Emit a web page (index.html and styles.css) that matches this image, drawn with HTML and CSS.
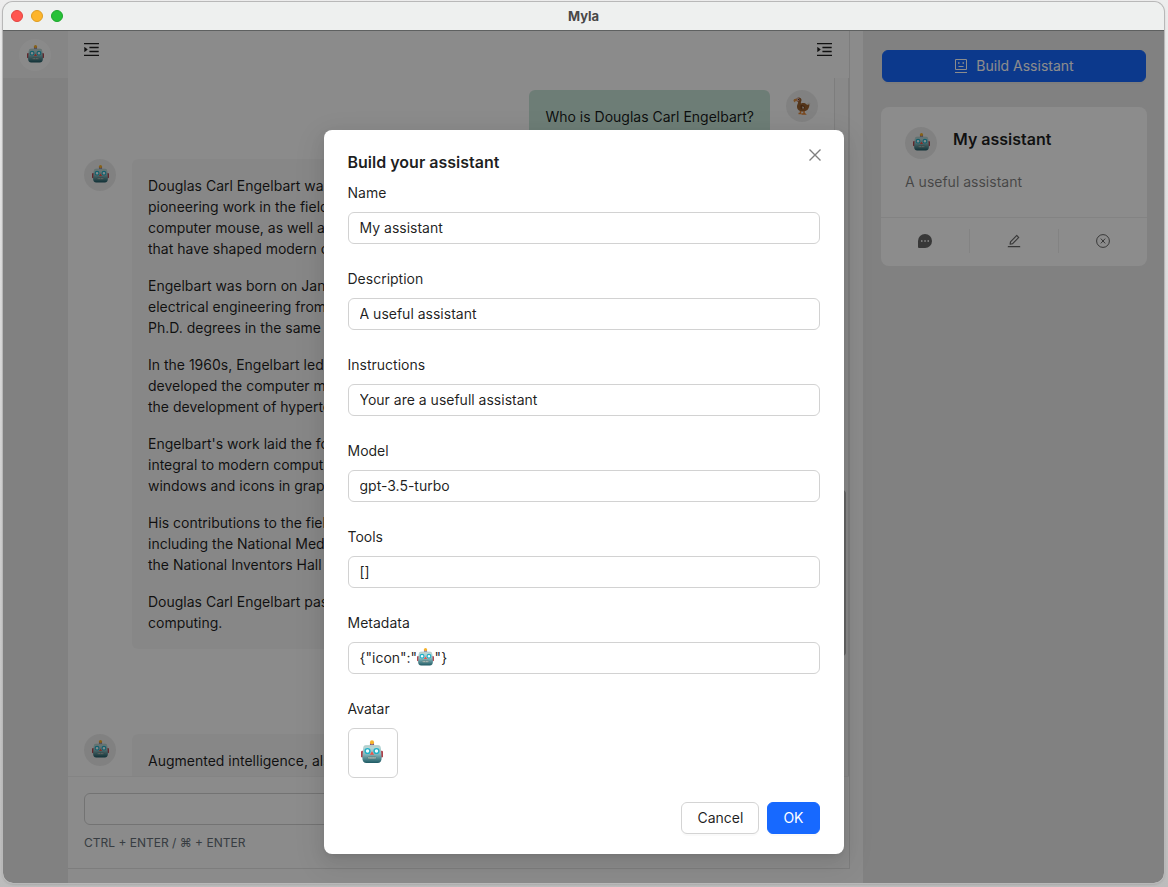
FILE: index.html
```html
<!DOCTYPE html>
<html lang="en">
<head>
<meta charset="utf-8">
<title>Myla</title>
<link rel="stylesheet" href="styles.css">
</head>
<body>
<svg class="defs" aria-hidden="true">
  <defs>
    <linearGradient id="face" x1="0" y1="0" x2="0" y2="1"><stop offset="0" stop-color="#c9e3e2"/><stop offset=".5" stop-color="#86b8bd"/><stop offset="1" stop-color="#1f5a64"/></linearGradient>
    <symbol id="robot" viewBox="0 0 32 34">
      <rect x="0" y="15" width="4" height="10" rx="2" fill="#b0424b"/>
      <rect x="28" y="15" width="4" height="10" rx="2" fill="#b0424b"/>
      <rect x="13" y="4" width="6" height="4" rx="1" fill="#75508f"/>
      <circle cx="16" cy="3" r="3" fill="#f6b22c"/>
      <path d="M7 7h18q4 0 4 5l1 14q0 7-6 7H8q-6 0-6-7l1-14q0-5 4-5z" fill="url(#face)"/>
      <path d="M7 7h18q3 0 3 3H4q0-3 3-3z" fill="#b7cfcc"/>
      <circle cx="9.500" cy="15.500" r="3.500" fill="#effcff" stroke="#20aec5" stroke-width="2"/>
      <circle cx="22.500" cy="15.500" r="3.500" fill="#effcff" stroke="#20aec5" stroke-width="2"/>
      <path d="M16 16l3 5h-6z" fill="#ef5146"/>
      <rect x="10" y="24" width="12" height="3" rx="1.500" fill="#d9ddd4" stroke="#4d7476"/>
      <path d="M13 24v3M16 24v3M19 24v3" stroke="#4d7476"/>
    </symbol>
    <symbol id="dodo" viewBox="0 0 36 36">
      <path d="M27 14c3-4 6-4 8-1-2 4-5 6-9 6z" fill="#dedad2"/>
      <path d="M7 3c4-4 10-2 10 3 0 3-2 5-1 7 5-2 9-1 12 3 2-1 4-1 5-1-1 10-6 14-13 14S8 26 8 19c0-4 3-6 2-9L7 8z" fill="#99612f"/>
      <path d="M15 17c4-2 8 0 9 4-1 4-6 5-9 2z" fill="#7b471f"/>
      <path d="M18 19l4 1-2 5z" fill="#e5ddd0"/>
      <path d="M8 2c3-1 5 1 5 4l-3 3-4-1z" fill="#d8a8a0"/>
      <path d="M7 4c-4-1-6 1-6 4l3 3 1-3 4-1z" fill="#dc9142"/>
      <circle cx="11" cy="5" r="1" fill="#251b19"/>
      <path d="M15 28v5h-4M22 28v4l2 2h-7" fill="none" stroke="#df8336" stroke-width="3"/>
    </symbol>
    <symbol id="menu" viewBox="112 112 800 800"><path fill="currentColor" d="M408 442h480c4.400 0 8-3.600 8-8v-56c0-4.400-3.600-8-8-8H408c-4.400 0-8 3.600-8 8v56c0 4.400 3.600 8 8 8zm-8 204c0 4.400 3.600 8 8 8h480c4.400 0 8-3.600 8-8v-56c0-4.400-3.600-8-8-8H408c-4.400 0-8 3.600-8 8v56zm504-486H120c-4.400 0-8 3.600-8 8v56c0 4.400 3.600 8 8 8h784c4.400 0 8-3.600 8-8v-56c0-4.400-3.600-8-8-8zm0 632H120c-4.400 0-8 3.600-8 8v56c0 4.400 3.600 8 8 8h784c4.400 0 8-3.600 8-8v-56c0-4.400-3.600-8-8-8zM142.400 642.100L298.700 519a8.840 8.840 0 000-13.900L142.400 381.900c-5.800-4.600-14.400-.5-14.400 6.900v246.300a8.900 8.900 0 0014.400 7z"/></symbol>
  </defs>
</svg>

<div class="window">
  <header class="titlebar">
    <div class="lights"><i class="light red"></i><i class="light amber"></i><i class="light green"></i></div>
    <h1 class="app-title">Myla</h1>
  </header>

  <div class="app">
    <nav class="rail"><a class="rail-item" href="#" aria-label="My assistant"><span class="avatar pale"><svg class="robot"><use href="#robot"/></svg></span></a></nav>

    <main class="center">
      <section class="chat">
        <div class="chat-head">
          <button class="plain" aria-label="Toggle left panel"><svg class="menu-icon"><use href="#menu"/></svg></button>
          <button class="plain" aria-label="Toggle right panel"><svg class="menu-icon"><use href="#menu"/></svg></button>
        </div>
        <div class="scroller">
          <div class="messages">
            <article class="message mine"><div class="bubble"><p>Who is Douglas Carl Engelbart?</p></div><span class="avatar"><svg class="dodo"><use href="#dodo"/></svg></span></article>
            <article class="message"><span class="avatar"><svg class="robot"><use href="#robot"/></svg></span>
              <div class="bubble wide">
                <p>Douglas Carl Engelbart was<br>pioneering work in the field<br>computer mouse, as well as<br>that have shaped modern c</p>
                <p>Engelbart was born on Janu<br>electrical engineering from<br>Ph.D. degrees in the same f</p>
                <p>In the 1960s, Engelbart led<br>developed the computer mo<br>the development of hyperte</p>
                <p>Engelbart's work laid the fo<br>integral to modern computi<br>windows and icons in graph</p>
                <p>His contributions to the fiel<br>including the National Meda<br>the National Inventors Hall o</p>
                <p>Douglas Carl Engelbart pas<br>computing.</p>
              </div></article>
            <article class="message mine"><div class="bubble"><p>Augmented intelligence?</p></div><span class="avatar"><svg class="dodo"><use href="#dodo"/></svg></span></article>
            <article class="message"><span class="avatar"><svg class="robot"><use href="#robot"/></svg></span><div class="bubble wide"><p>Augmented intelligence, als</p></div></article>
          </div>
          <div class="track"><div class="thumb"></div></div>
        </div>
        <form class="composer">
          <input class="field" id="prompt" type="text">
          <label class="hint" for="prompt">CTRL + ENTER / ⌘ + ENTER</label>
        </form>
      </section>
    </main>

    <aside class="side">
      <button class="btn primary build"><svg class="icon-14" viewBox="0 0 14 16" fill="none" stroke="currentColor"><path d="M1.500 1.500h11v10h-11zM1 14.500h12M4.500 8.500h5"/><path d="M4 5h1.500M8.500 5H10" stroke-width="1.500"/></svg>Build Assistant</button>
      <article class="card">
        <div class="card-body">
          <div class="card-head"><span class="avatar"><svg class="robot"><use href="#robot"/></svg></span><h2 class="card-title">My assistant</h2></div>
          <p class="card-text">A useful assistant</p>
        </div>
        <div class="actions">
          <button class="plain action" aria-label="Chat"><svg class="icon-14" viewBox="0 0 14 14"><path d="M0 7a7 7 0 1 1 7 7H1q-1 0-1-1z" fill="currentColor"/><path d="M3 7h1.500M6.300 7h1.500M9.500 7H11" stroke="#fff" stroke-width="1.400"/></svg></button>
          <button class="plain action" aria-label="Edit"><svg class="icon-14" viewBox="64 64 896 896"><path fill="currentColor" d="M257.700 752c2 0 4-.2 6-.5L431.900 722c2-.4 3.900-1.300 5.300-2.800l423.900-423.900a9.960 9.960 0 000-14.100L694.900 114.900c-1.900-1.900-4.400-2.900-7.100-2.900s-5.200 1-7.100 2.900L256.800 538.800c-1.500 1.500-2.400 3.300-2.800 5.300l-29.500 168.200a33.500 33.500 0 009.400 29.800c6.600 6.400 14.900 9.900 23.800 9.900zm67.400-174.400L687.800 215l73.300 73.300-362.700 362.600-88.900 15.700 15.600-89zM880 836H144c-17.700 0-32 14.300-32 32v36c0 4.400 3.600 8 8 8h784c4.400 0 8-3.600 8-8v-36c0-17.700-14.300-32-32-32z"/></svg></button>
          <button class="plain action" aria-label="Delete"><svg class="icon-14" viewBox="0 0 14 14" fill="none" stroke="currentColor"><circle cx="7" cy="7" r="6.400"/><path d="M4.800 4.600l4.400 4.800M9.200 4.600L4.800 9.400"/></svg></button>
        </div>
      </article>
    </aside>

    <div class="mask">
      <section class="modal" role="dialog" aria-labelledby="dlg-title">
        <button class="plain close" aria-label="Close"><svg class="close-icon" viewBox="0 0 12 12" fill="none" stroke="currentColor" stroke-width="1.400"><path d="M.5.5l11 11M11.500.5l-11 11"/></svg></button>
        <h2 class="modal-title" id="dlg-title">Build your assistant</h2>
        <form class="form">
          <div class="row"><label for="name">Name</label><input class="field" id="name" type="text" value="My assistant"></div>
          <div class="row"><label for="desc">Description</label><input class="field" id="desc" type="text" value="A useful assistant"></div>
          <div class="row"><label for="inst">Instructions</label><input class="field" id="inst" type="text" value="Your are a usefull assistant"></div>
          <div class="row"><label for="model">Model</label><input class="field" id="model" type="text" value="gpt-3.5-turbo"></div>
          <div class="row"><label for="tools">Tools</label><input class="field" id="tools" type="text" value="[]"></div>
          <div class="row"><label for="meta">Metadata</label><div class="meta"><input class="field" id="meta" type="text" value="{&quot;icon&quot;:&quot;&#8195;&#8197;&quot;}"><svg class="robot meta-icon"><use href="#robot"/></svg></div></div>
          <div class="row"><label for="avatar">Avatar</label><button class="picker" id="avatar" type="button"><svg class="robot-large"><use href="#robot"/></svg></button></div>
          <footer class="buttons"><button class="btn" type="button">Cancel</button><button class="btn primary" type="button">OK</button></footer>
        </form>
      </section>
    </div>
  </div>
</div>
</body>
</html>
```

FILE: styles.css
```css
* { box-sizing: border-box; }
html, body { height: 100%; }
body {
  margin: 0;
  padding: 2px 4px 4px 3px;
  overflow: hidden;
  background: linear-gradient(#ededed, #d0d0d0 60%, #bcbcbc);
  font: 14px/22px Inter, "Open Sans", sans-serif;
  color: rgba(0, 0, 0, .88);
}
h1, h2, p { margin: 0; }
button, input { font: inherit; color: inherit; }
svg { display: block; }
.defs { position: absolute; width: 0; height: 0; }

.window {
  height: 100%;
  display: flex;
  flex-direction: column;
  border-radius: 10px;
  overflow: hidden;
  box-shadow: 0 0 0 1px #b8b8b8, 0 1px 3px rgba(0, 0, 0, .2);
}
.titlebar {
  flex: none;
  height: 29px;
  display: grid;
  grid-template-columns: 1fr auto 1fr;
  align-items: center;
  padding: 0 8px;
  background: #eef0ef;
  border-bottom: 1px solid #5e6060;
}
.lights { display: flex; gap: 8px; }
.light { width: 12px; height: 12px; border-radius: 50%; border: 1px solid; }
.red { background: #ff5650; border-color: #e2443f; }
.amber { background: #fdb52c; border-color: #dd9c22; }
.green { background: #27c138; border-color: #1da62c; }
.app-title { font-size: 13px; line-height: 20px; font-weight: 700; color: #484848; }

.app { position: relative; flex: 1; min-height: 0; display: flex; background: #fff; }
.rail { flex: none; width: 65px; background: #ebebeb; }
.rail-item { display: grid; place-items: center; height: 47px; padding-right: 1px; background: #f4f4f4; }
.avatar {
  flex: none;
  width: 32px;
  height: 32px;
  display: grid;
  place-items: center;
  border-radius: 50%;
  background: #ececec;
}
.pale { background: #fcfcfc; }
.robot { width: 17px; height: 18px; margin-bottom: 2px; }
.robot-large { width: 22px; height: 24px; margin: 0 2px 2px 0; }
.dodo { width: 18px; height: 18px; margin-bottom: 1px; }
.plain { padding: 0; border: 0; background: none; }

.center { flex: 1; min-width: 0; padding: 0 13px 14px 0; background: #fdfdfd; }
.chat {
  height: 100%;
  display: flex;
  flex-direction: column;
  border: solid #e4e4e4;
  border-width: 0 1px 1px 0;
}
.chat-head {
  flex: none;
  height: 47px;
  padding: 11px 17px 0 16px;
  display: flex;
  align-items: flex-start;
  justify-content: space-between;
}
.menu-icon { width: 15px; height: 15px; }
.scroller { flex: 1; min-height: 0; display: flex; overflow: hidden; }
.messages { flex: 1; min-width: 0; padding: 12px 16px; display: flex; flex-direction: column; gap: 16px; }
.message { display: flex; align-items: flex-start; gap: 16px; }
.mine { justify-content: flex-end; }
.bubble {
  display: flex;
  flex-direction: column;
  gap: 16px;
  padding: 16px;
  line-height: 21px;
  white-space: nowrap;
  border-radius: 6px;
  background: #f6f6f6;
}
.wide { flex: 1; margin-right: 48px; }
.mine .bubble { background: #c7e3d7; }
.track {
  flex: none;
  width: 15px;
  padding: 412px 2px 0 3px;
  background: #fafafa;
  border: solid #e4e4e4;
  border-width: 0 1px;
}
.thumb { height: 166px; border-radius: 4px; background: #b8b8b8; }
.composer {
  flex: none;
  height: 92px;
  padding: 16px;
  display: flex;
  flex-direction: column;
  gap: 8px;
  border-top: 1px solid #f0f0f0;
}
.hint { font-size: 12px; line-height: 20px; color: #667078; }
.field {
  flex: none;
  display: block;
  width: 100%;
  height: 32px;
  padding: 3px 11px 5px;
  border: 1px solid #d2d2d2;
  border-radius: 6px;
  background: #fff;
  outline: 0;
}

.side {
  flex: none;
  width: 301px;
  padding: 19px 17px 19px 18px;
  display: flex;
  flex-direction: column;
  gap: 25px;
  background: #ebebeb;
}
.btn {
  height: 32px;
  padding: 0 15px;
  border: 1px solid #d4d4d4;
  border-radius: 6px;
  background: #fff;
  box-shadow: 0 2px 0 rgba(0, 0, 0, .02);
}
.primary { border-color: #1769ff; background: #1769ff; color: #fff; }
.build { margin: 0 1px; display: flex; align-items: center; justify-content: center; gap: 8px; }
.icon-14 { width: 14px; height: 14px; }
.build .icon-14 { height: 16px; }
.card { border-radius: 8px; background: #fff; }
.card-body { padding: 20px 24px 24px; }
.card-head { display: flex; gap: 16px; }
.card-title { font-size: 16px; line-height: 24px; font-weight: 600; }
.card-text { margin-top: 12px; color: rgba(0, 0, 0, .5); }
.actions { display: flex; padding: 11px 0 13px; border-top: 1px solid #eee; }
.action { flex: 1; height: 24px; display: grid; place-items: center; color: rgba(0, 0, 0, .6); }
.action + .action { border-left: 1px solid #eee; }

.mask {
  position: absolute;
  inset: 0;
  display: flex;
  align-items: flex-start;
  justify-content: center;
  padding-top: 99px;
  background: rgba(0, 0, 0, .45);
}
.modal {
  position: relative;
  width: 520px;
  max-width: 100%;
  padding: 20px 24px;
  border-radius: 8px;
  background: #fff;
  box-shadow: 0 6px 16px rgba(0, 0, 0, .08), 0 3px 6px -4px rgba(0, 0, 0, .12), 0 9px 28px 8px rgba(0, 0, 0, .05);
}
.close { position: absolute; top: 14px; right: 18px; width: 22px; height: 22px; display: grid; place-items: center; color: rgba(0, 0, 0, .5); }
.close-icon { width: 12px; height: 12px; }
.modal-title { margin-bottom: 8px; font-size: 16px; line-height: 24px; font-weight: 600; }
.form { display: flex; flex-direction: column; gap: 24px; }
.row { display: flex; flex-direction: column; align-items: flex-start; gap: 8px; }
.meta { position: relative; width: 100%; }
.meta-icon { position: absolute; left: 69px; top: 6px; }
.picker { width: 50px; height: 50px; padding: 0; display: grid; place-items: center; border: 1px solid #d2d2d2; border-radius: 6px; background: #fff; }
.buttons { display: flex; justify-content: flex-end; gap: 8px; }
```
